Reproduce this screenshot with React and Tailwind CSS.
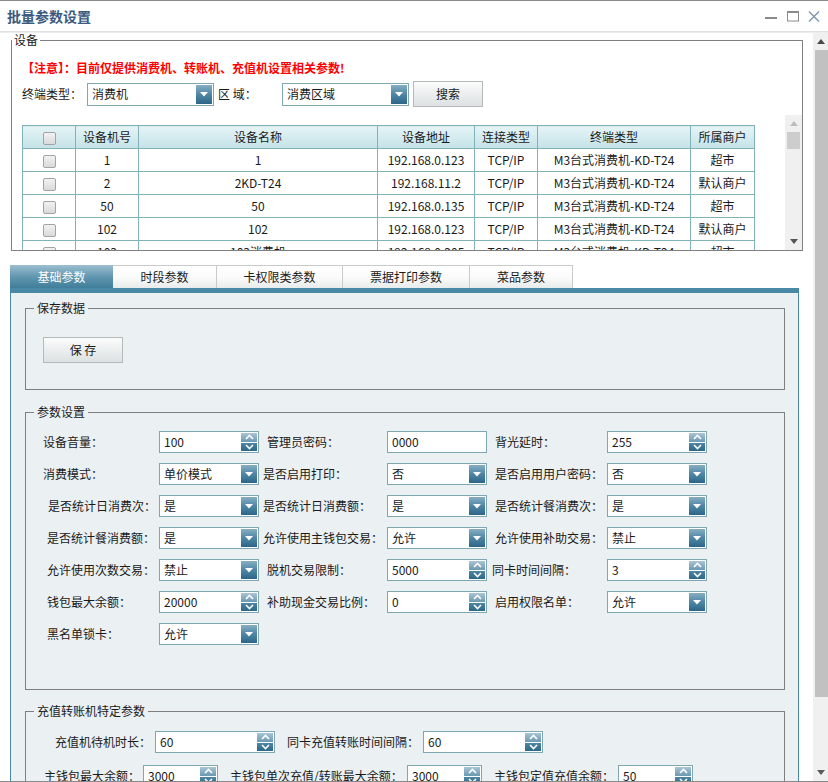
import React from 'react';

const devices = [
  { id: '1', name: '1', ip: '192.168.0.123', shop: '超市' },
  { id: '2', name: '2KD-T24', ip: '192.168.11.2', shop: '默认商户' },
  { id: '50', name: '50', ip: '192.168.0.135', shop: '超市' },
  { id: '102', name: '102', ip: '192.168.0.123', shop: '默认商户' },
  { id: '103', name: '103消费机', ip: '192.168.0.205', shop: '超市' },
];

// label cell classes carry the per-label offsets seen in the screenshot
const params = [
  [
    { label: '设备音量：', lc: 'w-[133px] pl-[17px]', kind: 'spin', value: '100' },
    { label: '管理员密码：', lc: 'w-[128px] pl-[8px]', kind: 'text', value: '0000' },
    { label: '背光延时：', lc: 'w-[120px] pl-[8px]', kind: 'spin', value: '255' },
  ],
  [
    { label: '消费模式：', lc: 'w-[133px] pl-[17px]', kind: 'select', value: '单价模式' },
    { label: '是否启用打印：', lc: 'w-[128px] pl-[4px]', kind: 'select', value: '否' },
    { label: '是否启用用户密码：', lc: 'w-[120px] pl-[8px]', kind: 'select', value: '否' },
  ],
  [
    { label: '是否统计日消费次：', lc: 'w-[133px] pl-[22px]', kind: 'select', value: '是' },
    { label: '是否统计日消费额：', lc: 'w-[128px] pl-[4px]', kind: 'select', value: '是' },
    { label: '是否统计餐消费次：', lc: 'w-[120px] pl-[8px]', kind: 'select', value: '是' },
  ],
  [
    { label: '是否统计餐消费额：', lc: 'w-[133px] pl-[21px]', kind: 'select', value: '是' },
    { label: '允许使用主钱包交易：', lc: 'w-[128px] pl-[4px]', kind: 'select', value: '允许' },
    { label: '允许使用补助交易：', lc: 'w-[120px] pl-[8px]', kind: 'select', value: '禁止' },
  ],
  [
    { label: '允许使用次数交易：', lc: 'w-[133px] pl-[21px]', kind: 'select', value: '禁止' },
    { label: '脱机交易限制：', lc: 'w-[128px] pl-[8px]', kind: 'spin', value: '5000' },
    { label: '同卡时间间隔：', lc: 'w-[120px] pl-[5px]', kind: 'spin', value: '3' },
  ],
  [
    { label: '钱包最大余额：', lc: 'w-[133px] pl-[21px]', kind: 'spin', value: '20000' },
    { label: '补助现金交易比例：', lc: 'w-[128px] pl-[8px]', kind: 'spin', value: '0' },
    { label: '启用权限名单：', lc: 'w-[120px] pl-[8px]', kind: 'select', value: '允许' },
  ],
  [{ label: '黑名单锁卡：', lc: 'w-[133px] pl-[21px]', kind: 'select', value: '允许' }],
];

const tabs = [
  { name: '基础参数', w: 'w-[103px]', active: true },
  { name: '时段参数', w: 'w-[104px]' },
  { name: '卡权限类参数', w: 'w-[126px]' },
  { name: '票据打印参数', w: 'w-[127px]' },
  { name: '菜品参数', w: 'w-[103px]' },
];

const DropBtn = () => (
  <span className="flex h-full w-[16px] shrink-0 items-center justify-center bg-linear-to-b from-[#86aec3] via-[#4f86a4] to-[#2c6687]">
    <svg width="8" height="5" viewBox="0 0 8 5">
      <path d="M0 0h8L4 4.5z" fill="#fff" />
    </svg>
  </span>
);

const SpinBtn = () => (
  <span className="flex h-full w-[16px] shrink-0 flex-col gap-px">
    <span className="flex flex-1 items-center justify-center bg-linear-to-b from-[#a9c6d5] to-[#6a98b2]">
      <svg width="9" height="6" viewBox="0 0 9 6">
        <path d="M1 5L4.5 1.5L8 5" stroke="#fff" strokeWidth="1.6" fill="none" />
      </svg>
    </span>
    <span className="flex flex-1 items-center justify-center bg-linear-to-b from-[#4e86a4] to-[#2d6888]">
      <svg width="9" height="6" viewBox="0 0 9 6">
        <path d="M1 1L4.5 4.5L8 1" stroke="#fff" strokeWidth="1.6" fill="none" />
      </svg>
    </span>
  </span>
);

const Box = ({ value, kind, w = 'w-[100px]', h = 'h-[22px]' }) => (
  <div className={`${w} ${h} flex shrink-0 border border-[#7fa7af] bg-white p-px`}>
    <span className="min-w-0 flex-1 self-center whitespace-nowrap pl-[3px] leading-[16px]">{value}</span>
    {kind === 'select' && <DropBtn />}
    {kind === 'spin' && <SpinBtn />}
  </div>
);

const Check = () => (
  <span className="inline-block h-[13px] w-[13px] rounded-[2px] border border-[#a3a3a3] bg-linear-to-b from-[#f2f2f2] to-[#dadada] align-middle" />
);

const TitleBar = () => (
  <div className="flex h-[30px] items-center justify-between pl-[7px] pr-[8px]">
    <span className="text-[14px] font-bold text-[#3b5a7e]">批量参数设置</span>
    <div className="flex items-center">
      <svg width="12" height="12" viewBox="0 0 12 12">
        <rect x="0" y="7" width="12" height="2" fill="#8a8a8a" />
      </svg>
      <svg width="12" height="12" viewBox="0 0 12 12" className="ml-[10px]">
        <rect x="0.5" y="1.5" width="11" height="9.5" stroke="#8a8a8a" fill="none" />
        <rect x="0" y="1" width="12" height="2" fill="#8a8a8a" />
      </svg>
      <svg width="12" height="12" viewBox="0 0 12 12" className="ml-[9px]">
        <path d="M1 1.5L11 11.5M11 1.5L1 11.5" stroke="#7e95ae" strokeWidth="1.4" />
      </svg>
    </div>
  </div>
);

const DeviceBox = () => (
  <fieldset className="ml-[11px] w-[792px] border border-[#7f7f7f]">
    <legend className="px-[2px] text-[12px] leading-[14px]">设备</legend>
    <div className="mt-[13px] pl-[10px] text-[12px] font-bold leading-[16px] text-[#ff0000]">
      【注意】：目前仅提供消费机、转账机、充值机设置相关参数!
    </div>
    <div className="mt-[5px] flex h-[26px] items-center pl-[10px]">
      <span className="w-[65px] shrink-0">终端类型：</span>
      <Box value="消费机" kind="select" w="w-[127px]" h="h-[23px]" />
      <span className="ml-[4px] w-[64px] shrink-0">区 域：</span>
      <Box value="消费区域" kind="select" w="w-[127px]" h="h-[23px]" />
      <button className="ml-[4px] h-[26px] w-[70px] border border-[#b4b9b9] bg-linear-to-b from-[#fbfcfc] to-[#dce1e1] text-[12px]">
        搜索
      </button>
    </div>
    <div className="mt-[8px] flex h-[135px]">
      <div className="min-w-0 flex-1 overflow-hidden pl-[10px] pt-[10px]">
        <table className="w-[733px] table-fixed border-collapse text-center text-[12px]">
          <thead>
            <tr className="h-[23px]">
              {[
                ['w-[53px]', null],
                ['w-[63px]', '设备机号'],
                ['w-[239px]', '设备名称'],
                ['w-[97px]', '设备地址'],
                ['w-[63px]', '连接类型'],
                ['w-[153px]', '终端类型'],
                ['w-[64px]', '所属商户'],
              ].map(([w, t], i) => (
                <th
                  key={i}
                  className={`${w} border border-[#80b2b7] bg-linear-to-b from-[#e5f4f6] to-[#c4e3e8] p-0 font-normal`}
                >
                  {t ?? <Check />}
                </th>
              ))}
            </tr>
          </thead>
          <tbody>
            {devices.map((d) => (
              <tr key={d.id} className="h-[23px]">
                <td className="border border-[#80b2b7] p-0">
                  <Check />
                </td>
                <td className="border border-[#80b2b7] p-0">{d.id}</td>
                <td className="border border-[#80b2b7] p-0">{d.name}</td>
                <td className="border border-[#80b2b7] p-0">{d.ip}</td>
                <td className="border border-[#80b2b7] p-0">TCP/IP</td>
                <td className="border border-[#80b2b7] p-0">M3台式消费机-KD-T24</td>
                <td className="border border-[#80b2b7] p-0">{d.shop}</td>
              </tr>
            ))}
          </tbody>
        </table>
      </div>
      <div className="flex w-[17px] shrink-0 flex-col items-center bg-[#f0f0f0]">
        <div className="flex h-[17px] items-center">
          <svg width="8" height="5" viewBox="0 0 8 5">
            <path d="M0 5h8L4 0z" fill="#bdbdbd" />
          </svg>
        </div>
        <div className="h-[17px] w-[13px] bg-[#cdcdcd]" />
        <div className="flex-1" />
        <div className="flex h-[17px] items-center">
          <svg width="8" height="5" viewBox="0 0 8 5">
            <path d="M0 0h8L4 5z" fill="#555" />
          </svg>
        </div>
      </div>
    </div>
  </fieldset>
);

const Group = ({ title, className, children }) => (
  <fieldset className={`ml-[14px] w-[760px] border border-[#7f7f7f] ${className}`}>
    <legend className="ml-[8px] px-[3px] text-[12px] leading-[16px]">{title}</legend>
    {children}
  </fieldset>
);

const Panel = () => (
  <div className="ml-[10px] mt-[14px] w-[789px]">
    <div className="flex h-[23px]">
      {tabs.map((t) =>
        t.active ? (
          <div
            key={t.name}
            className={`${t.w} flex items-center justify-center bg-linear-to-b from-[#9cbfd0] via-[#6297b0] to-[#3f7e9a] text-white`}
          >
            {t.name}
          </div>
        ) : (
          <div
            key={t.name}
            className={`${t.w} flex items-center justify-center border-r border-t border-[#c9cbcb] bg-linear-to-b from-[#ffffff] via-[#fbfbfb] to-[#e9ecec]`}
          >
            {t.name}
          </div>
        )
      )}
    </div>
    <div className="h-[5px] bg-[#4a89a5]" />
    <div className="h-[600px] overflow-hidden border-x border-[#4a89a5] bg-[#ebf0f3] pt-[7px]">
      <Group title="保存数据" className="pb-[26px]">
        <button className="ml-[17px] mt-[21px] h-[26px] w-[80px] border border-[#b4b9b9] bg-linear-to-b from-[#fbfcfc] to-[#dce1e1] text-[12px]">
          保 存
        </button>
      </Group>
      <Group title="参数设置" className="mt-[14px] pb-[39px]">
        <div className="mt-[6px]">
          {params.map((row, i) => (
            <div key={i} className="flex h-[32px] items-center">
              {row.map((f) => (
                <React.Fragment key={f.label}>
                  <span className={`${f.lc} shrink-0 whitespace-nowrap`}>{f.label}</span>
                  <Box value={f.value} kind={f.kind} />
                </React.Fragment>
              ))}
            </div>
          ))}
        </div>
      </Group>
      <Group title="充值转账机特定参数" className="mt-[13px] pb-[20px]">
        <div className="mt-[7px] flex h-[32px] items-center">
          <span className="w-[129px] shrink-0 pl-[29px]">充值机待机时长：</span>
          <Box value="60" kind="spin" w="w-[120px]" />
          <span className="w-[148px] shrink-0 pl-[12px]">同卡充值转账时间间隔：</span>
          <Box value="60" kind="spin" w="w-[120px]" />
        </div>
        <div className="mt-[2px] flex h-[32px] items-center">
          <span className="w-[117px] shrink-0 pl-[18px]">主钱包最大余额：</span>
          <Box value="3000" kind="spin" w="w-[75px]" />
          <span className="w-[189px] shrink-0 whitespace-nowrap pl-[12px]">主钱包单次充值/转账最大余额：</span>
          <Box value="3000" kind="spin" w="w-[75px]" />
          <span className="w-[136px] shrink-0 pl-[12px]">主钱包定值充值余额：</span>
          <Box value="50" kind="spin" w="w-[75px]" />
        </div>
      </Group>
    </div>
  </div>
);

const PageScrollbar = () => (
  <div className="flex w-[15px] shrink-0 flex-col items-end bg-[#f0f0f0]">
    <div className="flex h-[17px] w-full items-center justify-center">
      <svg width="8" height="5" viewBox="0 0 8 5">
        <path d="M0 5h8L4 0z" fill="#4a4a4a" />
      </svg>
    </div>
    <div className="h-[647px] w-[13px] bg-[#c1c1c1]" />
    <div className="flex-1" />
    <div className="flex h-[17px] w-full items-center justify-center">
      <svg width="8" height="5" viewBox="0 0 8 5">
        <path d="M0 0h8L4 5z" fill="#5a5a5a" />
      </svg>
    </div>
  </div>
);

export default function App() {
  return (
    <div className="flex h-[782px] w-[828px] flex-col overflow-hidden border-y border-[#8a8a8a] bg-white font-['Noto_Sans_CJK_SC',sans-serif] text-[12px] text-[#1a1a1a]">
      <TitleBar />
      <div className="h-[2px] bg-linear-to-b from-[#dadada] to-[#f4f4f4]" />
      <div className="flex min-h-0 flex-1">
        <div className="w-[813px] shrink-0 overflow-hidden">
          <DeviceBox />
          <Panel />
        </div>
        <PageScrollbar />
      </div>
    </div>
  );
}
